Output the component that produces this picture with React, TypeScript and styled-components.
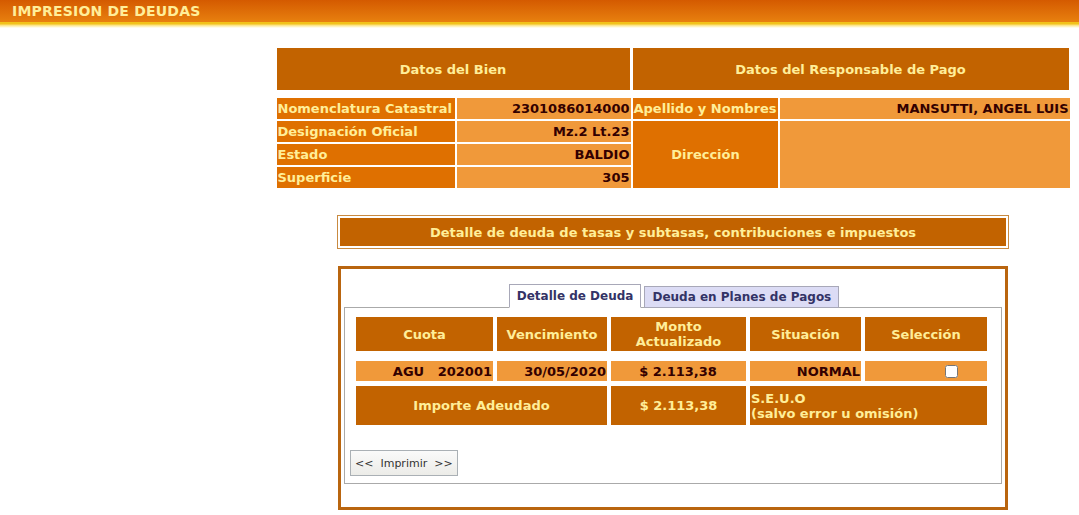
import React from "react";
import styled, { createGlobalStyle } from "styled-components";

const GlobalStyle = createGlobalStyle`
  html, body {
    margin: 0;
    padding: 0;
    background: #ffffff;
    font-family: "DejaVu Sans", Verdana, sans-serif;
  }
`;

const dark = "#c26300";
const label = "#df7000";
const light = "#f0993a";
const yellowText = "#ffee99";

const TopBar = styled.header`
  height: 22px;
  background: linear-gradient(#d45a00, #e8800f);
  display: flex;
  align-items: center;
  padding-left: 12px;
  color: ${yellowText};
  font-size: 14px;
  font-weight: 700;
  letter-spacing: 0.2px;
`;

const TopLine = styled.div`
  height: 6px;
  background: linear-gradient(#f2c21a 0, #f2c21a 2px, #fbe07a 3px, #fff6d0 5px, #ffffff 6px);
`;

const Layout = styled.div`
  display: grid;
  grid-template-columns: 277px 793px;
  padding-top: 20px;
`;

const Main = styled.main`
  grid-column: 2;
  display: flex;
  flex-direction: column;
  align-items: center;
  padding-right: 1px;
`;

const InfoGrid = styled.div`
  width: 793px;
  display: grid;
  grid-template-columns: 178px 174px 145px 1fr;
  grid-template-rows: 48px 21px 21px 21px 21px;
  column-gap: 2px;
  row-gap: 2px;
  font-size: 13px;
  font-weight: 700;
`;

const HeadCell = styled.div<{ $span: number }>`
  grid-column: span ${({ $span }) => $span};
  background: ${dark};
  color: ${yellowText};
  display: flex;
  align-items: center;
  justify-content: center;
  margin-bottom: 6px;
  margin-right: ${({ $span }) => ($span === 2 ? "1px" : "0")};
`;

const LabelCell = styled.div<{ $center?: boolean; $rows?: number }>`
  background: ${label};
  color: ${yellowText};
  display: flex;
  align-items: center;
  justify-content: ${({ $center }) => ($center ? "center" : "flex-start")};
  padding-left: 1px;
  white-space: nowrap;
  grid-row: span ${({ $rows }) => $rows ?? 1};
`;

const ValueCell = styled.div<{ $rows?: number }>`
  background: ${light};
  color: #330000;
  display: flex;
  align-items: center;
  justify-content: flex-end;
  padding-right: 1px;
  white-space: nowrap;
  grid-row: span ${({ $rows }) => $rows ?? 1};
`;

const DetailTitle = styled.div`
  margin-top: 27px;
  width: 666px;
  border: 1px solid #c98a40;
  padding: 2px;
`;

const DetailBar = styled.div`
  height: 28px;
  background: ${dark};
  color: ${yellowText};
  font-size: 13px;
  font-weight: 700;
  display: flex;
  align-items: center;
  justify-content: center;
`;

const TabsBox = styled.section`
  margin-top: 17px;
  width: 658px;
  border: 3px solid #b9650f;
  padding: 15px 3px 23px;
`;

const TabStrip = styled.div`
  display: flex;
  justify-content: center;
  gap: 3px;
  position: relative;
  z-index: 1;
  margin-bottom: -1px;
  padding-left: 2px;
`;

const Tab = styled.div<{ $active?: boolean }>`
  height: ${({ $active }) => ($active ? "22px" : "20px")};
  margin-top: ${({ $active }) => ($active ? "0" : "1px")};
  padding: 0 7px;
  border: 1px solid #a8a8b8;
  border-bottom: ${({ $active }) => ($active ? "1px solid #ffffff" : "1px solid #a8a8b8")};
  background: ${({ $active }) => ($active ? "#ffffff" : "#dcdcf5")};
  color: #333366;
  font-size: 12px;
  font-weight: 700;
  display: flex;
  align-items: center;
  align-self: flex-end;
`;

const TabPanel = styled.div`
  border: 1px solid #aaaaaa;
  padding: 9px 5px 7px;
`;

const DebtGrid = styled.div`
  margin-left: 6px;
  width: 631px;
  display: grid;
  grid-template-columns: 137px 110px 135px 111px 122px;
  grid-template-rows: 34px 10px 20px 5px 39px;
  column-gap: 4px;
  font-size: 13px;
  font-weight: 700;
`;

const DebtHead = styled.div<{ $span?: number; $left?: boolean }>`
  grid-column: span ${({ $span }) => $span ?? 1};
  background: ${dark};
  color: ${yellowText};
  display: flex;
  align-items: center;
  justify-content: ${({ $left }) => ($left ? "flex-start" : "center")};
  text-align: ${({ $left }) => ($left ? "left" : "center")};
  line-height: 15px;
  padding-left: ${({ $left }) => ($left ? "1px" : "0")};
  white-space: nowrap;
`;

const DebtValue = styled.div<{ $align: "right" | "center" }>`
  background: ${light};
  color: #330000;
  display: flex;
  align-items: center;
  justify-content: ${({ $align }) => ($align === "right" ? "flex-end" : "center")};
  padding-right: 1px;
  white-space: pre;
`;

const RowGap = styled.div`
  grid-column: 1 / -1;
`;

const CheckBox = styled.input`
  margin: 0 28px 0 0;
  width: 13px;
  height: 13px;
`;

const PrintButton = styled.button`
  margin-top: 25px;
  height: 26px;
  padding: 0 4px;
  border: 1px solid #aab0b5;
  background: linear-gradient(#fafafa, #ecece8);
  color: #333333;
  font-family: "DejaVu Sans", Verdana, sans-serif;
  font-size: 11px;
  white-space: pre;
  cursor: pointer;
`;

export default function App() {
  return (
    <>
      <GlobalStyle />
      <TopBar>IMPRESION DE DEUDAS</TopBar>
      <TopLine />
      <Layout>
        <Main>
          <InfoGrid>
            <HeadCell $span={2}>Datos del Bien</HeadCell>
            <HeadCell $span={2}>Datos del Responsable de Pago</HeadCell>

            <LabelCell>Nomenclatura Catastral</LabelCell>
            <ValueCell>2301086014000</ValueCell>
            <LabelCell>Apellido y Nombres</LabelCell>
            <ValueCell>MANSUTTI, ANGEL LUIS</ValueCell>

            <LabelCell>Designación Oficial</LabelCell>
            <ValueCell>Mz.2 Lt.23</ValueCell>
            <LabelCell $center $rows={3}>Dirección</LabelCell>
            <ValueCell $rows={3} />

            <LabelCell>Estado</LabelCell>
            <ValueCell>BALDIO</ValueCell>

            <LabelCell>Superficie</LabelCell>
            <ValueCell>305</ValueCell>
          </InfoGrid>

          <DetailTitle>
            <DetailBar>Detalle de deuda de tasas y subtasas, contribuciones e impuestos</DetailBar>
          </DetailTitle>

          <TabsBox>
            <TabStrip>
              <Tab $active>Detalle de Deuda</Tab>
              <Tab>Deuda en Planes de Pagos</Tab>
            </TabStrip>
            <TabPanel>
              <DebtGrid>
                <DebtHead>Cuota</DebtHead>
                <DebtHead>Vencimiento</DebtHead>
                <DebtHead>
                  Monto
                  <br />
                  Actualizado
                </DebtHead>
                <DebtHead>Situación</DebtHead>
                <DebtHead>Selección</DebtHead>

                <RowGap />

                <DebtValue $align="right">{"AGU   202001"}</DebtValue>
                <DebtValue $align="right">30/05/2020</DebtValue>
                <DebtValue $align="center">$ 2.113,38</DebtValue>
                <DebtValue $align="right">NORMAL</DebtValue>
                <DebtValue $align="right">
                  <CheckBox type="checkbox" />
                </DebtValue>

                <RowGap />

                <DebtHead $span={2}>Importe Adeudado</DebtHead>
                <DebtHead>$ 2.113,38</DebtHead>
                <DebtHead $span={2} $left>
                  S.E.U.O
                  <br />
                  (salvo error u omisión)
                </DebtHead>
              </DebtGrid>
              <PrintButton type="button">{"<<  Imprimir  >>"}</PrintButton>
            </TabPanel>
          </TabsBox>
        </Main>
      </Layout>
    </>
  );
}
